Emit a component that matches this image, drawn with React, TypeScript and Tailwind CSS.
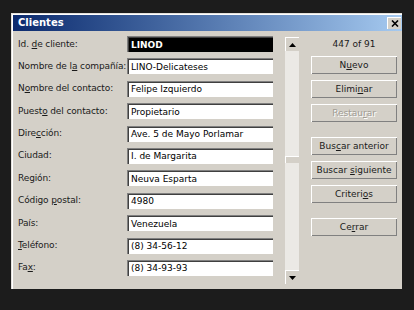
import React from "react";

const font = { fontFamily: '"DejaVu Sans", Verdana, sans-serif' };

function Field({ label, value, selected }: { label: React.ReactNode; value: string; selected?: boolean }) {
  return (
    <div className="flex items-center h-[16px]">
      <div className="w-[109px] text-[9px] text-[#1a1a1a] whitespace-nowrap leading-none tracking-[-0.12px]">{label}</div>
      <div className="w-[146px] h-[16px] border-t border-l border-[#808080] border-b-white border-r-white">
        <div
          className={
            "h-full border-t border-l border-[#404040] border-b-[#d4d0c8] border-r-[#d4d0c8] flex items-center pl-[2px] text-[9px] leading-none whitespace-nowrap overflow-hidden " +
            (selected ? "bg-black text-white font-bold" : "bg-white text-black")
          }
        >
          <span>{value}</span>
        </div>
      </div>
    </div>
  );
}

function Btn({ children, disabled, className }: { children: React.ReactNode; disabled?: boolean; className?: string }) {
  return (
    <div className={"w-[86px] h-[18px] border-t border-l border-white border-b-[#404040] border-r-[#404040] " + (className || "")}>
      <div
        className={
          "h-full border-b border-r border-b-[#808080] border-r-[#808080] border-t-0 border-l-0 flex items-center justify-center text-[9px] leading-none whitespace-nowrap " +
          (disabled ? "text-[#a09c94] [text-shadow:1px_1px_0_#ffffff]" : "text-[#1a1a1a]")
        }
      >
        <span>{children}</span>
      </div>
    </div>
  );
}

function Arrow({ up }: { up?: boolean }) {
  return (
    <div className="w-[14px] h-[14px] bg-[#d4d0c8] border-t border-l border-white border-b-[#404040] border-r-[#404040] flex items-center justify-center">
      <svg width="7" height="4" viewBox="0 0 7 4">
        {up ? <polygon points="3.5,0 7,4 0,4" fill="#000" /> : <polygon points="0,0 7,0 3.5,4" fill="#000" />}
      </svg>
    </div>
  );
}

export default function App() {
  return (
    <div className="w-[414px] h-[310px] bg-[#1c1c1c] pt-[13px] pl-[11px] overflow-hidden" style={font}>
      <div className="w-[391px] h-[276px] bg-[#d4d0c8] border-t border-l border-[#e4e1dc] border-b-[#404040] border-r-[#404040]">
        <div className="h-full border-t border-l border-white border-b-[#808080] border-r-[#808080] flex flex-col">
          {/* title bar */}
          <div className="h-[16px] bg-gradient-to-r from-[#0c2a6e] to-[#a6caf0] flex items-center justify-between pl-[5px] pr-[1px]">
            <span className="text-white font-bold text-[10px] leading-none">Clientes</span>
            <div className="w-[14px] h-[12px] bg-[#d4d0c8] border-t border-l border-white border-b-[#404040] border-r-[#404040] flex items-center justify-center">
              <svg width="8" height="7" viewBox="0 0 8 7">
                <path d="M1 0.5 L7 6.5 M7 0.5 L1 6.5" stroke="#000" strokeWidth="1.6" />
              </svg>
            </div>
          </div>
          {/* body */}
          <div className="flex flex-1 pt-[5px] pl-[5px]">
            <div className="flex flex-col gap-[6.4px] w-[255px]">
              <Field label={<>Id. <u>d</u>e cliente:</>} value="LINOD" selected />
              <Field label={<>Nombre de l<u>a</u> compañía:</>} value="LINO-Delicateses" />
              <Field label={<>N<u>o</u>mbre del contacto:</>} value="Felipe Izquierdo" />
              <Field label={<>Puest<u>o</u> del contacto:</>} value="Propietario" />
              <Field label={<>Dire<u>c</u>ción:</>} value="Ave. 5 de Mayo Porlamar" />
              <Field label={<>Ciudad:</>} value="I. de Margarita" />
              <Field label={<>Región:</>} value="Neuva Esparta" />
              <Field label={<>Código <u>p</u>ostal:</>} value="4980" />
              <Field label={<>País:</>} value="Venezuela" />
              <Field label={<><u>T</u>eléfono:</>} value="(8) 34-56-12" />
              <Field label={<>Fa<u>x</u>:</>} value="(8) 34-93-93" />
            </div>
            {/* scrollbar */}
            <div className="ml-[12px] mt-[1px] w-[14px] h-[247px] flex flex-col">
              <Arrow up />
              <div className="flex-1 bg-[#ebe9e5] flex flex-col">
                <div className="mt-[105px] h-[7px] w-[14px] bg-[#d4d0c8] border-t border-l border-white border-b-[#404040] border-r-[#404040]" />
              </div>
              <Arrow />
            </div>
            {/* buttons */}
            <div className="ml-[12px] flex flex-col w-[86px]">
              <div className="h-[16px] flex items-center justify-center text-[9px] text-[#1a1a1a] leading-none">447 of 91</div>
              <Btn className="mt-[4px]">N<u>u</u>evo</Btn>
              <Btn className="mt-[6px]">Elimi<u>n</u>ar</Btn>
              <Btn className="mt-[6px]" disabled>Restau<u>r</u>ar</Btn>
              <Btn className="mt-[15px]">Bus<u>c</u>ar anterior</Btn>
              <Btn className="mt-[6px]">Buscar <u>s</u>iguiente</Btn>
              <Btn className="mt-[6px]">Criteri<u>o</u>s</Btn>
              <Btn className="mt-[15px]">Ce<u>r</u>rar</Btn>
            </div>
          </div>
        </div>
      </div>
    </div>
  );
}
